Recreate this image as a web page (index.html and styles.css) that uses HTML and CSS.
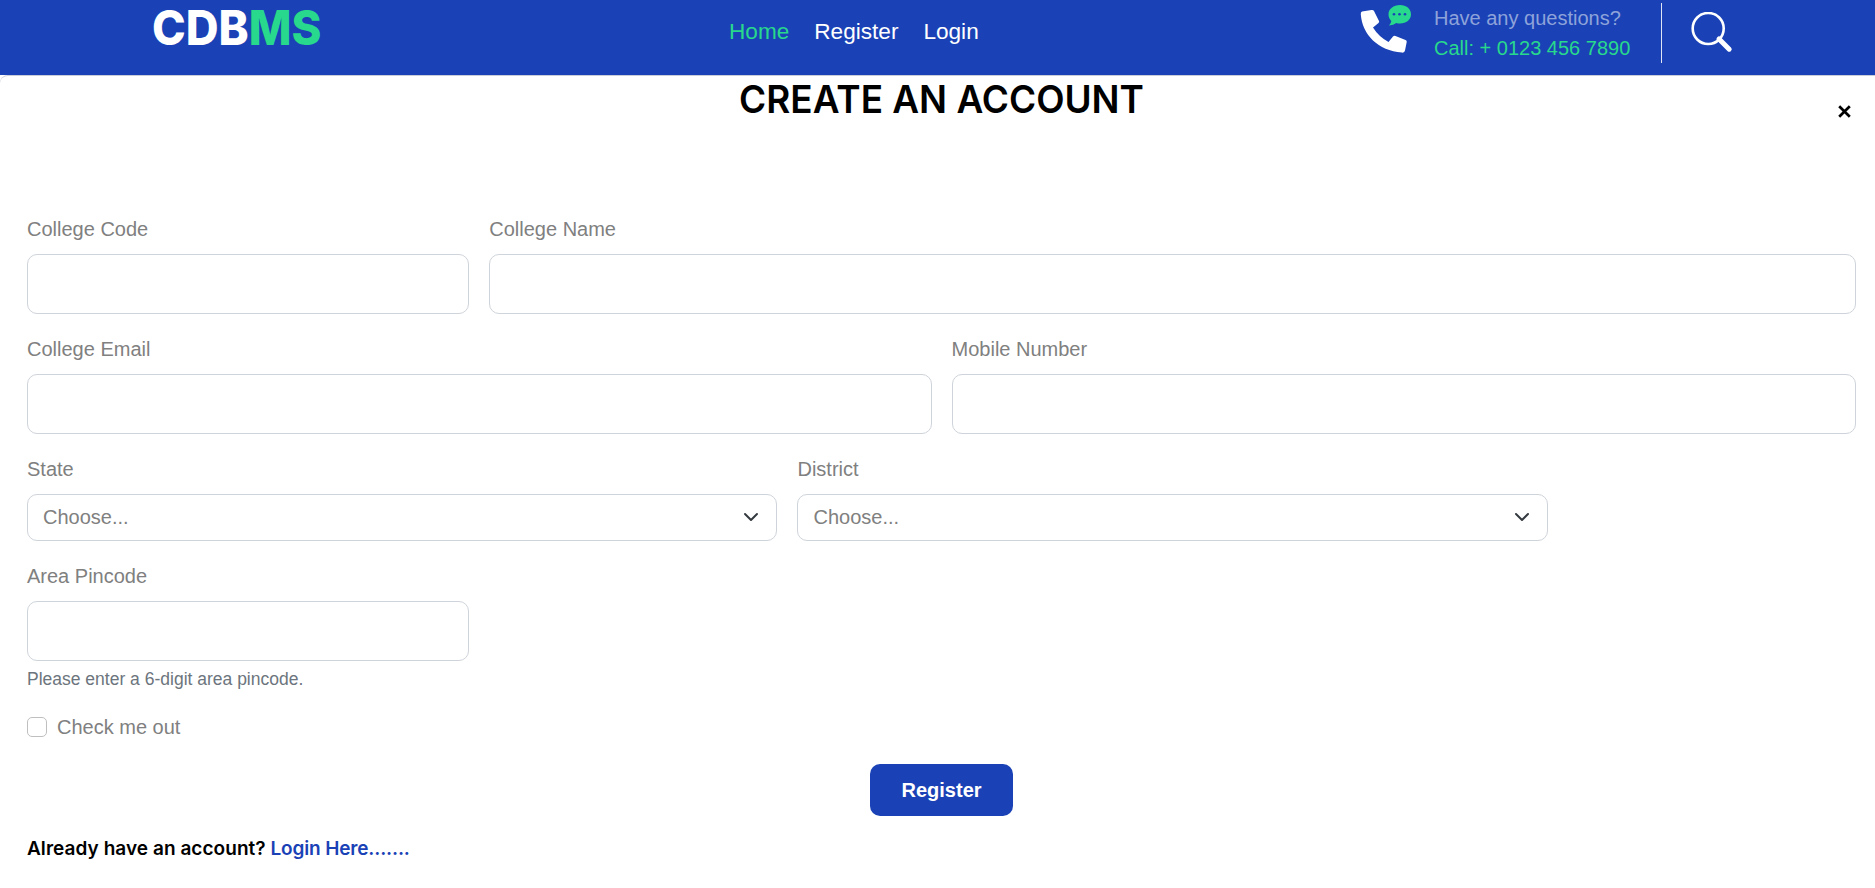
FILE: index.html
```html
<!DOCTYPE html>
<html lang="en">
<head>
<meta charset="utf-8">
<title>CDBMS - Create an account</title>
<link rel="stylesheet" href="styles.css">
</head>
<body>
<header class="header">
  <a class="logo">CDB<span class="logo-accent">MS</span></a>
  <nav class="nav">
    <a class="nav-link active">Home</a>
    <a class="nav-link">Register</a>
    <a class="nav-link">Login</a>
  </nav>
  <div class="contact">
    <svg class="phone-icon" width="52" height="50" viewBox="0 0 52 50">
      <path fill="#fff" d="M2 11.500Q.5 12 .8 14.500C2.500 35 18 50.500 42 52.600Q44.500 53 45 50.500L46.700 42Q47 40.700 45.500 40L35.500 35.900Q34 35.200 33 36.500L28.500 42Q18.500 36.500 13 27.500L18.500 23Q19.500 22.200 19 21L14 11Q13.300 9.700 11.500 10Z" transform="translate(0 -3)"/>
      <path fill="#28d88c" d="M40 2C33.500 2 28.500 6 28.500 11.200C28.500 14 29.500 16.300 31.300 17.900Q31.200 20 29 22.500Q33.500 22.300 36.300 20Q38 20.500 40 20.500C46.300 20.500 51 16.500 51 11.200S46.300 2 40 2Z"/>
      <g fill="#1a42b6"><circle cx="34" cy="11.200" r="1.300"/><circle cx="39.500" cy="11.200" r="1.300"/><circle cx="45" cy="11.200" r="1.300"/></g>
    </svg>
    <div class="contact-text">
      <div class="contact-question">Have any questions?</div>
      <div class="contact-phone">Call: + 0123 456 7890</div>
    </div>
  </div>
  <div class="divider"></div>
  <svg class="search-icon" width="42" height="42" viewBox="0 0 42 42" fill="none" stroke="#fff">
    <circle cx="17.200" cy="16.500" r="15.500" stroke-width="2.600"/>
    <path d="M28 27L38.200 37.200" stroke-width="5" stroke-linecap="round"/>
  </svg>
</header>
<main class="panel">
  <svg class="close" width="13" height="13" viewBox="0 0 13 13"><path d="M1.200 1.200L11.800 11.800M11.800 1.200L1.200 11.800" stroke="#000" stroke-width="2.700"/></svg>
  <h1 class="title">CREATE AN ACCOUNT</h1>
  <form class="form">
    <div class="col-3"><label class="label" for="code">College Code</label><input class="control" id="code"></div>
    <div class="col-9"><label class="label" for="name">College Name</label><input class="control" id="name"></div>
    <div class="col-6"><label class="label" for="email">College Email</label><input class="control" id="email"></div>
    <div class="col-6"><label class="label" for="mobile">Mobile Number</label><input class="control" id="mobile"></div>
    <div class="col-5"><div class="label">State</div>
      <div class="select">Choose...<svg width="16" height="16" viewBox="0 0 16 16"><path d="m2 5 6 6 6-6" fill="none" stroke="#343a40" stroke-width="2" stroke-linecap="round" stroke-linejoin="round"/></svg></div></div>
    <div class="col-5"><div class="label">District</div>
      <div class="select">Choose...<svg width="16" height="16" viewBox="0 0 16 16"><path d="m2 5 6 6 6-6" fill="none" stroke="#343a40" stroke-width="2" stroke-linecap="round" stroke-linejoin="round"/></svg></div></div>
    <div class="col-3"><label class="label" for="pin">Area Pincode</label><input class="control" id="pin"><div class="help">Please enter a 6-digit area pincode.</div></div>
    <label class="check"><input class="checkbox" type="checkbox">Check me out</label>
    <button class="submit" type="button">Register</button>
  </form>
  <p class="login"><span class="login-question">Already have an account?</span> <a class="login-link">Login Here.......</a></p>
</main>
</body>
</html>
```
FILE: styles.css
```css
* { box-sizing: border-box; }
body {
  margin: 0;
  height: 888px;
  overflow: hidden;
  background: #fff;
  color: #808080;
  font: 20px/30px "Liberation Sans", Arial, sans-serif;
}
.header {
  display: flex;
  align-items: flex-start;
  height: 75px;
  padding-left: 152px;
  background: #1a42b6;
}
.logo {
  width: 577px;
  padding-top: 3px;
  color: #fff;
  font: 800 48px/50px Inter, sans-serif;
  transform: scaleX(0.945);
  transform-origin: left;
}
.logo-accent { color: #28d88c; }
.nav {
  display: flex;
  gap: 25px;
  width: 631px;
  padding-top: 17px;
  font-size: 22.600px;
}
.nav-link { color: #fff; }
.nav-link.active { color: #28d88c; }
.contact { display: flex; width: 301px; }
.phone-icon { margin: 3px 22px 0 0; overflow: visible; }
.contact-text { padding-top: 3px; white-space: nowrap; }
.contact-question { color: #8ea2da; }
.contact-phone { color: #28d88c; }
.divider { width: 1px; height: 60px; margin-top: 3px; background: #dfe5f5; }
.search-icon { margin: 12px 0 0 29px; }
.panel {
  position: relative;
  height: 813px;
  padding: 0 18.9px 0 27px;
  border-top: 1px solid #c9cdda;
  border-radius: 8px 0 0 0;
  background: #fff;
}
.close { position: absolute; top: 29px; right: 24px; }
.title {
  margin: 0;
  height: 138px;
  padding-top: 3px;
  color: #000;
  font: 600 38.500px/40px Inter, sans-serif;
  text-align: center;
  transform: scaleX(0.958);
}
.form {
  display: grid;
  grid-template-columns: repeat(12, minmax(0, 1fr));
  gap: 20px;
}
.col-3 { grid-column: span 3; }
.col-5 { grid-column: span 5; }
.col-6 { grid-column: span 6; }
.col-9 { grid-column: span 9; }
.col-5 + .col-3 { grid-column: 1 / span 3; }
.label { display: block; height: 30px; margin-bottom: 10px; }
.control {
  display: block;
  width: 100%;
  height: 60px;
  border: 1px solid #ced4da;
  border-radius: 10px;
  background: #fff;
}
.select {
  display: flex;
  align-items: center;
  justify-content: space-between;
  height: 47px;
  padding: 0 17px 1px 15px;
  border: 1px solid #ced4da;
  border-radius: 10px;
}
.help { margin-top: 5px; height: 26px; color: #6c757d; font-size: 17.5px; line-height: 26px; }
.check {
  display: flex;
  grid-column: 1 / -1;
  gap: 10px;
  height: 32px;
}
.checkbox {
  appearance: none;
  width: 20px;
  height: 20px;
  margin: 5px 0 0;
  border: 1px solid #bfbfbf;
  border-radius: 5px;
}
.submit {
  grid-column: 1 / -1;
  justify-self: center;
  width: 143px;
  height: 52px;
  border: 0;
  border-radius: 10px;
  background: #1a42b6;
  color: #fff;
  font: bold 20px "Liberation Sans", Arial, sans-serif;
}
.login {
  margin: 18px 0 0;
  color: #000;
  font: 600 19px/30px Inter, sans-serif;
}
.login-question { letter-spacing: 0.05px; }
.login-link { color: #1a42b6; letter-spacing: -0.15px; }
```
